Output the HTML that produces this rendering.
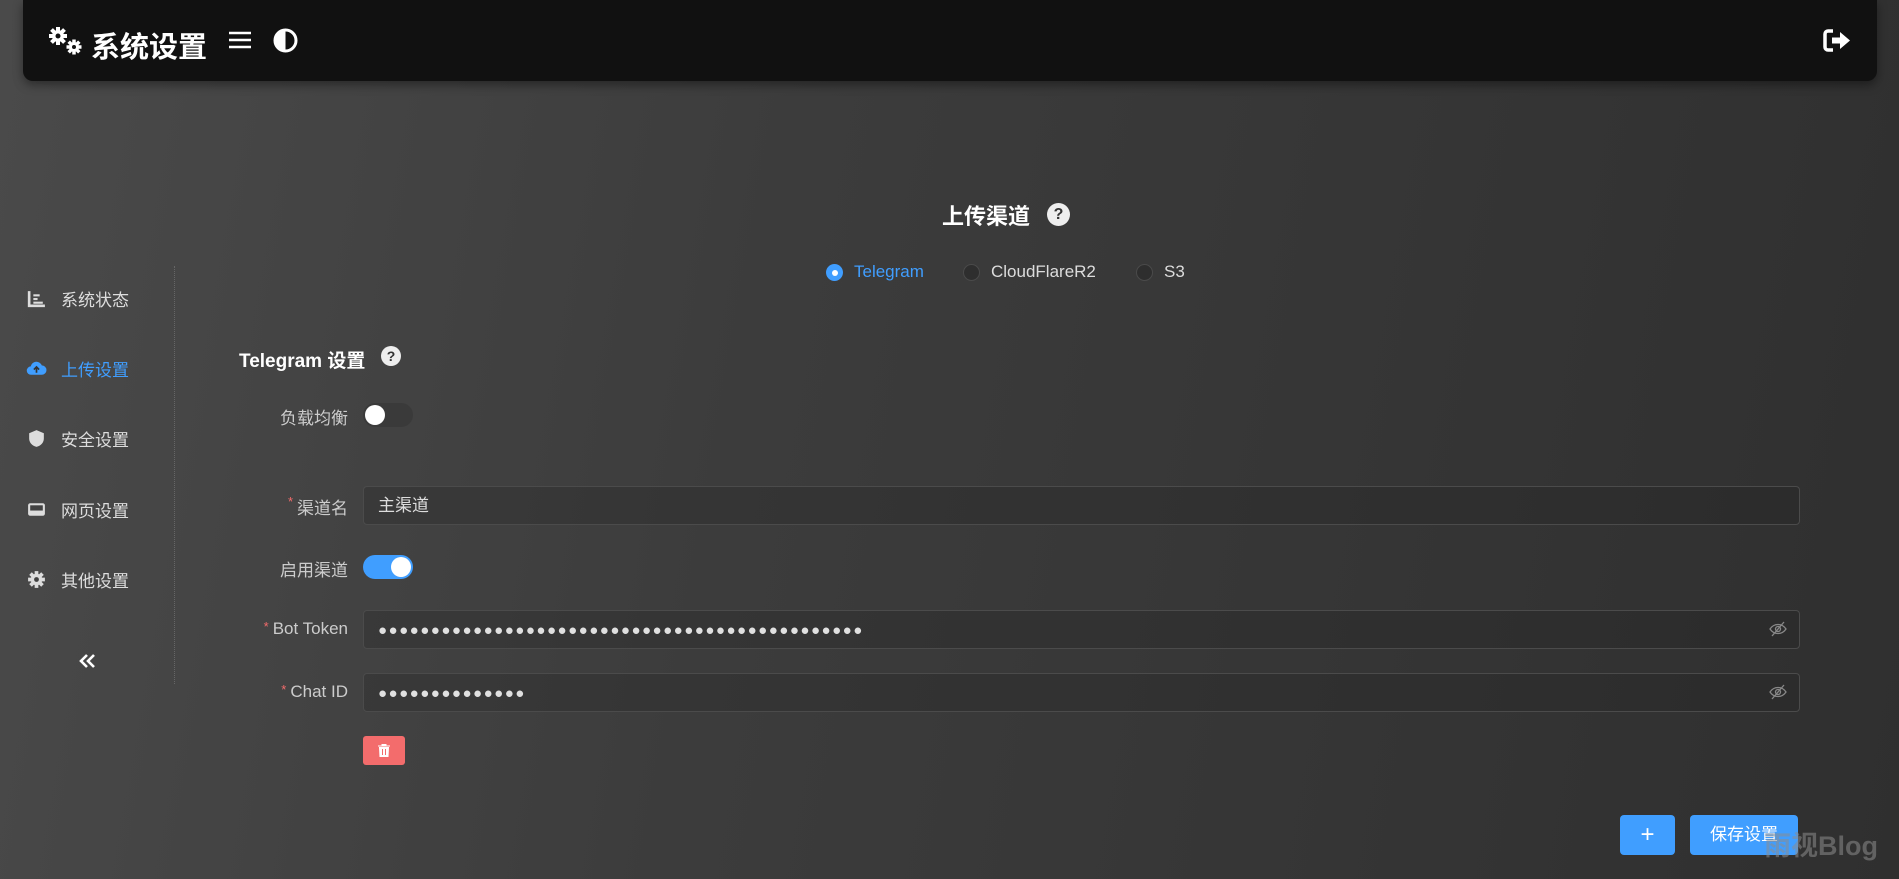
<!DOCTYPE html>
<html><head><meta charset="utf-8"><style>
*{box-sizing:border-box;margin:0;padding:0}
body{width:1899px;height:879px;overflow:hidden;font-family:"Liberation Sans","Noto Sans CJK SC",sans-serif;background:linear-gradient(100deg,#4a4a4a 0%,#3c3c3c 40%,#2f2f2f 100%);color:#ddd;position:relative}
.hdr{position:absolute;left:23px;top:0;width:1854px;height:81px;background:#111;border-radius:0 0 10px 10px;box-shadow:0 4px 10px rgba(0,0,0,.4)}
.abs{position:absolute}
.side{position:absolute;left:0;top:266px;width:175px;height:418px;border-right:1px dotted #666}
.si{position:absolute;left:26px;font-size:17px;color:#ddd;display:flex;align-items:center;height:30px}
.si svg{width:21px;height:21px;margin-right:14px}
.lbl{position:absolute;right:1551px;font-size:17px;color:#ccc;text-align:right;white-space:nowrap}
.star{color:#f56c6c;font-size:13px;vertical-align:top;margin-right:4px}
.inp{position:absolute;left:363px;width:1437px;height:39px;border:1px solid #4b4b4b;border-radius:4px;background:rgba(30,30,30,.25);font-size:17px;color:#ddd;padding-left:14px;line-height:37px}
.dots{letter-spacing:1.5px;font-size:15px;color:#e0e0e0}
.eye{position:absolute;right:12px;top:10px}
.q{display:inline-block;width:23px;height:23px;border-radius:50%;background:#eee;color:#333;font-size:16px;font-weight:bold;text-align:center;line-height:23px}
</style></head><body>
<div class="hdr">
 <svg class="abs" style="left:24px;top:26px" width="38" height="30" viewBox="0 0 38 30"><g fill="#fff"><circle cx="11" cy="10" r="6"/><g stroke="#fff" stroke-width="4"><line x1="11" y1="1" x2="11" y2="19"/><line x1="2" y1="10" x2="20" y2="10"/><line x1="4.5" y1="3.5" x2="17.5" y2="16.5"/><line x1="17.5" y1="3.5" x2="4.5" y2="16.5"/></g><circle cx="11" cy="10" r="2.5" fill="#111"/><circle cx="27" cy="21" r="5"/><g stroke="#fff" stroke-width="3.5"><line x1="27" y1="13.5" x2="27" y2="28.5"/><line x1="19.5" y1="21" x2="34.5" y2="21"/><line x1="21.7" y1="15.7" x2="32.3" y2="26.3"/><line x1="32.3" y1="15.7" x2="21.7" y2="26.3"/></g><circle cx="27" cy="21" r="2" fill="#111"/></g></svg>
 <div class="abs" style="left:68px;top:24px;font-size:29px;font-weight:bold;color:#fff">系统设置</div>
 <svg class="abs" style="left:206px;top:31px" width="22" height="18"><g stroke="#fff" stroke-width="2.6"><line x1="0" y1="2" x2="22" y2="2"/><line x1="0" y1="9" x2="22" y2="9"/><line x1="0" y1="16" x2="22" y2="16"/></g></svg>
 <svg class="abs" style="left:250px;top:28px" width="25" height="25" viewBox="0 0 25 25"><circle cx="12.5" cy="12.5" r="10.5" fill="none" stroke="#fff" stroke-width="3"/><path d="M12.5 2 A10.5 10.5 0 0 0 12.5 23Z" fill="#fff"/></svg>
 <svg class="abs" style="left:1800px;top:28px" width="28" height="25" viewBox="0 0 28 25"><path d="M10 3H5a3 3 0 0 0-3 3v13a3 3 0 0 0 3 3h5" fill="none" stroke="#fff" stroke-width="3.5"/><path d="M9 9.5h8V4l10 8.5-10 8.5v-5.5H9z" fill="#fff"/></svg>
</div>

<div class="side">
 <div class="si" style="top:17px"><svg viewBox="0 0 20 20"><path d="M3 3v14h15" fill="none" stroke="#ddd" stroke-width="2.5"/><g stroke="#ddd" stroke-width="2"><line x1="7" y1="7" x2="13" y2="7"/><line x1="7" y1="10.5" x2="11" y2="10.5"/><line x1="7" y1="14" x2="16" y2="14"/></g></svg>系统状态</div>
 <div class="si" style="top:87px;color:#409eff"><svg viewBox="0 0 20 20"><path d="M5 16a4 4 0 0 1-.5-8A5.5 5.5 0 0 1 15 7a4.5 4.5 0 0 1 0 9z" fill="#409eff"/><path d="M10 14V9M7.5 11l2.5-2.5 2.5 2.5" stroke="#333" stroke-width="1.6" fill="none"/></svg>上传设置</div>
 <div class="si" style="top:157px"><svg viewBox="0 0 20 20"><path d="M10 2l7 3v5c0 4-3 7-7 8-4-1-7-4-7-8V5z" fill="#ddd"/></svg>安全设置</div>
 <div class="si" style="top:228px"><svg viewBox="0 0 20 20"><rect x="2" y="4" width="16" height="12" rx="2" fill="#ddd"/><rect x="4" y="6" width="12" height="5" fill="#424242"/></svg>网页设置</div>
 <div class="si" style="top:298px"><svg viewBox="0 0 20 20"><g stroke="#ddd" stroke-width="3.5"><line x1="10" y1="2" x2="10" y2="18"/><line x1="2" y1="10" x2="18" y2="10"/><line x1="4.3" y1="4.3" x2="15.7" y2="15.7"/><line x1="15.7" y1="4.3" x2="4.3" y2="15.7"/></g><circle cx="10" cy="10" r="5.5" fill="#ddd"/><circle cx="10" cy="10" r="2.3" fill="#424242"/></svg>其他设置</div>
 <svg class="abs" style="left:79px;top:387px" width="17" height="16" viewBox="0 0 17 16"><path d="M8 2 2 8l6 6M15 2 9 8l6 6" fill="none" stroke="#fff" stroke-width="2.6"/></svg>
</div>

<div class="abs" style="left:942px;top:199px;font-size:22px;font-weight:bold;color:#fff">上传渠道</div>
<div class="abs q" style="left:1047px;top:203px">?</div>

<div class="abs" style="left:826px;top:264px;width:17px;height:17px;border-radius:50%;background:#409eff"><div style="width:6px;height:6px;background:#fff;border-radius:50%;margin:5.5px"></div></div>
<div class="abs" style="left:854px;top:262px;font-size:17px;color:#409eff">Telegram</div>
<div class="abs" style="left:963px;top:264px;width:17px;height:17px;border-radius:50%;border:1px solid #4a4a4a;background:#2e2e2e"></div>
<div class="abs" style="left:991px;top:262px;font-size:17px;color:#ddd">CloudFlareR2</div>
<div class="abs" style="left:1136px;top:264px;width:17px;height:17px;border-radius:50%;border:1px solid #4a4a4a;background:#2e2e2e"></div>
<div class="abs" style="left:1164px;top:262px;font-size:17px;color:#ddd">S3</div>

<div class="abs" style="left:239px;top:346px;font-size:19px;font-weight:bold;color:#fff">Telegram 设置</div>
<div class="abs q" style="left:381px;top:346px;width:20px;height:20px;line-height:20px;font-size:14px">?</div>

<div class="lbl" style="top:404px">负载均衡</div>
<div class="abs" style="left:363px;top:403px;width:50px;height:24px;border-radius:12px;background:#3a3a3a"><div style="width:20px;height:20px;border-radius:50%;background:#fff;margin:2px"></div></div>

<div class="lbl" style="top:494px"><span class="star">*</span>渠道名</div>
<div class="inp" style="top:486px">主渠道</div>

<div class="lbl" style="top:556px">启用渠道</div>
<div class="abs" style="left:363px;top:555px;width:50px;height:24px;border-radius:12px;background:#409eff"><div style="width:20px;height:20px;border-radius:50%;background:#fff;margin:2px 0 0 28px"></div></div>

<div class="lbl" style="top:619px"><span class="star">*</span>Bot Token</div>
<div class="inp" style="top:610px"><span class="dots">●●●●●●●●●●●●●●●●●●●●●●●●●●●●●●●●●●●●●●●●●●●●●●</span>
<svg class="eye" width="18" height="16" viewBox="0 0 18 16"><path d="M1 8c4-6 12-6 16 0-4 6-12 6-16 0z" fill="none" stroke="#888" stroke-width="1.3"/><circle cx="9" cy="8" r="2.5" fill="none" stroke="#888" stroke-width="1.3"/><line x1="3" y1="15" x2="15" y2="1" stroke="#888" stroke-width="1.3"/></svg></div>

<div class="lbl" style="top:682px"><span class="star">*</span>Chat ID</div>
<div class="inp" style="top:673px"><span class="dots">●●●●●●●●●●●●●●</span>
<svg class="eye" width="18" height="16" viewBox="0 0 18 16"><path d="M1 8c4-6 12-6 16 0-4 6-12 6-16 0z" fill="none" stroke="#888" stroke-width="1.3"/><circle cx="9" cy="8" r="2.5" fill="none" stroke="#888" stroke-width="1.3"/><line x1="3" y1="15" x2="15" y2="1" stroke="#888" stroke-width="1.3"/></svg></div>

<div class="abs" style="left:363px;top:736px;width:42px;height:29px;border-radius:3px;background:#f36c6c"><svg style="margin:8px 0 0 15px" width="12" height="13" viewBox="0 0 12 13"><path d="M0 2h12M4 2V0h4v2M1.5 3.5h9L10 13H2z" fill="#fff" stroke="#fff" stroke-width="1"/><g stroke="#f36c6c" stroke-width="1"><line x1="4.5" y1="5" x2="4.5" y2="11"/><line x1="7.5" y1="5" x2="7.5" y2="11"/></g></svg></div>

<div class="abs" style="left:1620px;top:815px;width:55px;height:40px;border-radius:4px;background:#409eff;color:#fff;font-size:24px;text-align:center;line-height:40px">+</div>
<div class="abs" style="left:1690px;top:815px;width:108px;height:40px;border-radius:4px;background:#409eff;color:#fff;font-size:17px;text-align:center;line-height:40px">保存设置</div>
<div class="abs" style="left:1764px;top:824px;font-size:27px;font-weight:bold;color:rgba(140,140,140,.55)">雨视Blog</div>
</body></html>
